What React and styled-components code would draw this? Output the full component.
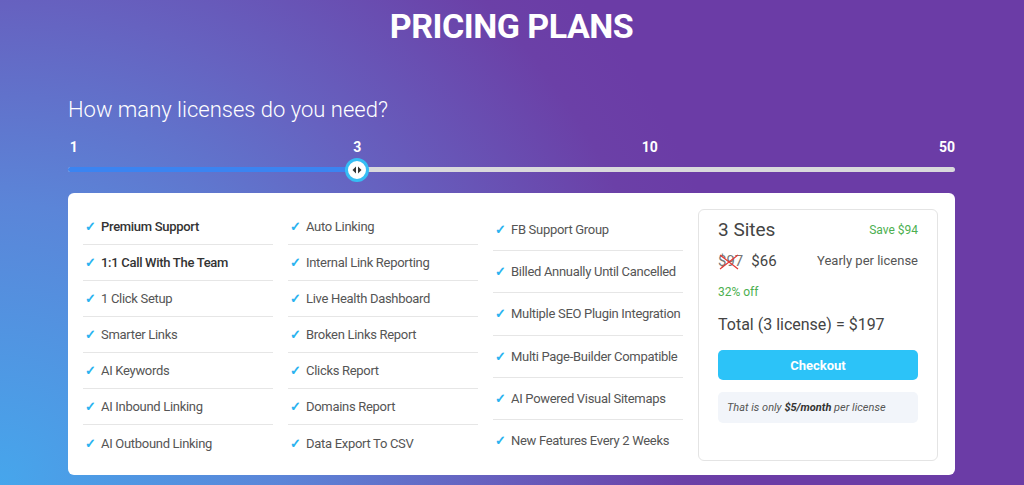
import React from "react";
import styled, { createGlobalStyle } from "styled-components";

const GlobalStyle = createGlobalStyle`
    html, body {
        margin: 0;
        padding: 0;
    }
    body {
        font-family: 'Roboto', 'Liberation Sans', sans-serif;
        background: #6b3ca6;
    }
`

const Page = styled.div`
    width: 1024px;
    height: 485px;
    overflow: hidden;
    box-sizing: border-box;
    padding: 0 69px 0 68px;
    background: radial-gradient(circle 760px at 0 100%, #46a6ec 0%, #5b85d8 37%, #6662c0 63%, #6b40a7 90%, #6b3ca6 100%);
    color: white;
`
const Title = styled.h1`
    margin: 0;
    padding-top: 6px;
    text-align: center;
    font-size: 34px;
    line-height: 40px;
    font-weight: 700;
    letter-spacing: -0.5px;
`
const Question = styled.h2`
    margin: 50px 0 0;
    font-size: 22px;
    line-height: 28px;
    font-weight: 300;
`
const Scale = styled.div`
    position: relative;
    height: 20px;
    margin-top: 15px;
    font-size: 14px;
    font-weight: 700;
`
const Tick = styled.span`
    position: absolute;
    top: 0;
    transform: translateX(${(props) => props.shift});
`
const Track = styled.div`
    position: relative;
    height: 5px;
    margin-top: 8px;
    border-radius: 3px;
    background: #d9d9dc;
`
const Fill = styled.div`
    height: 100%;
    border-radius: 3px;
    background: #3b84f1;
`
const Thumb = styled.div`
    position: absolute;
    top: 50%;
    width: 18px;
    height: 18px;
    border-radius: 50%;
    background: white;
    border: 3px solid #36bdf4;
    transform: translate(-50%, -50%);
    display: flex;
    align-items: center;
    justify-content: center;
`
const Card = styled.div`
    margin-top: 21px;
    background: white;
    border-radius: 6px;
    padding: 16px 17px 14px 15px;
    display: flex;
    gap: 15px;
    color: #555;
`
const Column = styled.ul`
    list-style: none;
    margin: 0;
    padding: 0;
    width: 190px;
    display: flex;
    flex-direction: column;
`
const Feature = styled.li`
    box-sizing: border-box;
    flex: 1;
    min-height: 36px;
    display: flex;
    align-items: center;
    gap: 8px;
    padding-left: 2px;
    white-space: nowrap;
    font-size: 13px;
    letter-spacing: -0.3px;
    font-weight: ${(props) => props.strong ? 500 : 400};
    color: ${(props) => props.strong ? '#333' : '#555'};
    border-bottom: 1px solid #e6e6e6;
    &:last-child {
        border-bottom: none;
    }
`
const Check = styled.span`
    color: #2bb3f0;
    font-size: 13px;
    font-weight: 700;
    width: 8px;
`
const Panel = styled.div`
    flex: 1;
    border: 1px solid #e4e4e4;
    border-radius: 6px;
    padding: 8px 19px 0;
    display: flex;
    flex-direction: column;
`
const PanelRow = styled.div`
    display: flex;
    justify-content: space-between;
    align-items: center;
`
const Sites = styled.div`
    font-size: 19px;
    line-height: 24px;
    color: #444;
`
const Green = styled.div`
    color: #4caf50;
    font-size: 12px;
`
const Prices = styled.div`
    margin-top: 10px;
    display: flex;
    gap: 8px;
    font-size: 15px;
    color: #444;
`
const OldPrice = styled.span`
    position: relative;
    color: #777;
    svg {
        position: absolute;
        left: 0;
        top: 1px;
    }
`
const Muted = styled.span`
    margin-top: 8px;
    font-size: 13px;
    color: #555;
`
const Discount = styled(Green)`
    margin-top: 15px;
`
const Total = styled.div`
    margin-top: 16px;
    font-size: 16px;
    color: #444;
`
const Button = styled.button`
    margin-top: 16px;
    height: 30px;
    border: none;
    border-radius: 5px;
    background: #2cc3f8;
    color: white;
    font-family: inherit;
    font-size: 13px;
    font-weight: 700;
`
const Note = styled.div`
    margin-top: 12px;
    padding: 9px 9px;
    border-radius: 5px;
    background: #f2f5fa;
    font-size: 11px;
    font-style: italic;
    color: #555;
    b {
        color: #333;
    }
`

const columns = [
    [
        ['Premium Support', true],
        ['1:1 Call With The Team', true],
        ['1 Click Setup'],
        ['Smarter Links'],
        ['AI Keywords'],
        ['AI Inbound Linking'],
        ['AI Outbound Linking'],
    ],
    [
        ['Auto Linking'],
        ['Internal Link Reporting'],
        ['Live Health Dashboard'],
        ['Broken Links Report'],
        ['Clicks Report'],
        ['Domains Report'],
        ['Data Export To CSV'],
    ],
    [
        ['FB Support Group'],
        ['Billed Annually Until Cancelled'],
        ['Multiple SEO Plugin Integration'],
        ['Multi Page-Builder Compatible'],
        ['AI Powered Visual Sitemaps'],
        ['New Features Every 2 Weeks'],
    ],
]

const ticks = [
    { label: '1', at: 0.2, shift: '0' },
    { label: '3', at: 32.6, shift: '-50%' },
    { label: '10', at: 65.6, shift: '-50%' },
    { label: '50', at: 100, shift: '-100%' },
]
const value = 32.6

function App() {
    return (
        <>
            <GlobalStyle />
            <Page>
                <Title>PRICING PLANS</Title>
                <Question>How many licenses do you need?</Question>
                <Scale>
                    {ticks.map((t) => (
                        <Tick key={t.label} shift={t.shift} style={{ left: `${t.at}%` }}>{t.label}</Tick>
                    ))}
                </Scale>
                <Track>
                    <Fill style={{ width: `${value}%` }} />
                    <Thumb style={{ left: `${value}%` }}>
                        <svg width="10" height="8" viewBox="0 0 10 8">
                            <path d="M4 0.5 L0.5 4 L4 7.5 Z" fill="#333" />
                            <path d="M6 0.5 L9.5 4 L6 7.5 Z" fill="#333" />
                        </svg>
                    </Thumb>
                </Track>
                <Card>
                    {columns.map((col, i) => (
                        <Column key={i}>
                            {col.map(([text, strong]) => (
                                <Feature key={text} strong={strong}>
                                    <Check>✓</Check>
                                    {text}
                                </Feature>
                            ))}
                        </Column>
                    ))}
                    <Panel>
                        <PanelRow>
                            <Sites>3 Sites</Sites>
                            <Green>Save $94</Green>
                        </PanelRow>
                        <PanelRow>
                            <Prices>
                                <OldPrice>
                                    $97
                                    <svg width="22" height="18" viewBox="0 0 22 18">
                                        <path d="M2 2 L20 16 M20 2 L2 16" stroke="#e53935" strokeWidth="1.2" />
                                    </svg>
                                </OldPrice>
                                <span>$66</span>
                            </Prices>
                            <Muted>Yearly per license</Muted>
                        </PanelRow>
                        <Discount>32% off</Discount>
                        <Total>Total (3 license) = $197</Total>
                        <Button>Checkout</Button>
                        <Note>That is only <b>$5/month</b> per license</Note>
                    </Panel>
                </Card>
            </Page>
        </>
    );
}

export default App;
